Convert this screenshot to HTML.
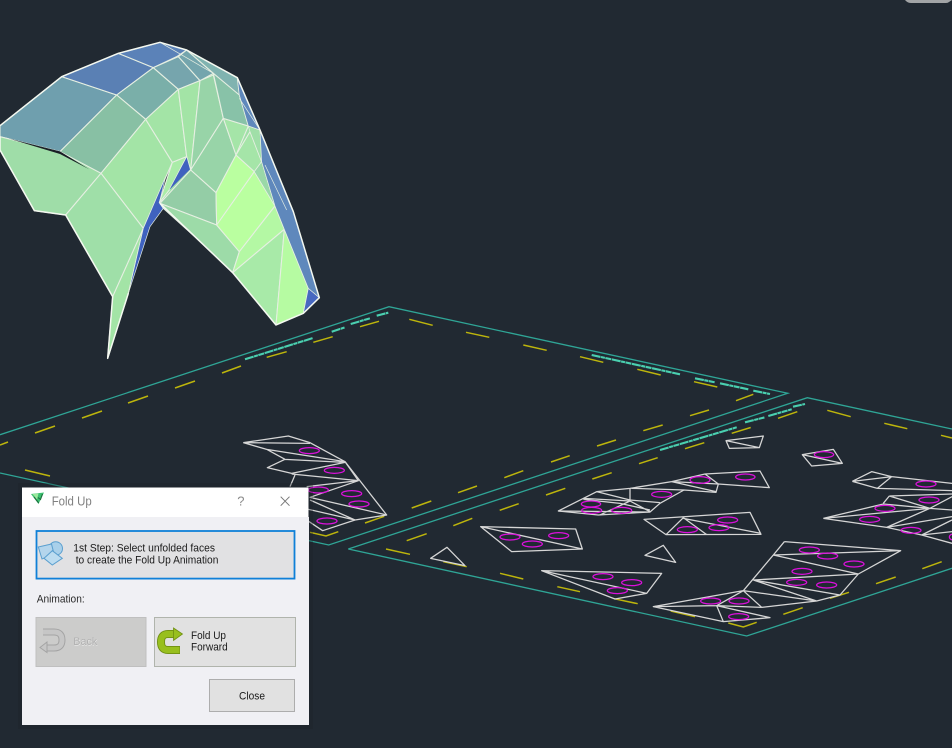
<!DOCTYPE html>
<html><head><meta charset="utf-8"><title>Fold Up</title>
<style>
html,body{margin:0;padding:0;background:#212932;width:952px;height:748px;overflow:hidden}
svg{display:block;filter:blur(.3px)}
text{font-family:"Liberation Sans",sans-serif}
</style></head>
<body>
<svg width="952" height="748" viewBox="0 0 952 748" xmlns="http://www.w3.org/2000/svg">
<rect width="952" height="748" fill="#212932"/>
<path d="M905,0 H952 V0 L949,2 Q948,3 946,3 H911 Q908,3 906,1Z" fill="#a2a4a6"/>

<!-- teal sheet borders -->
<g fill="none" stroke="#2fa596" stroke-width="1.3">
<path d="M0,434.7 L389,306.7 L787.7,393.3 L328.7,545 L0,473"/>
<path d="M348.3,549 L807.3,397.7 L952,429"/>
<path d="M348.3,549 L746.7,636 L952,568.3"/>
</g>

<!-- garbled sheet labels -->
<g fill="none" stroke="#4ad0b0" stroke-width="2.1" stroke-dasharray="9 .5 4 .5 6 .6">
<path d="M245,359.3 L313,338 M331.7,331.7 L345,327.3 M350.7,324 L370,318.3 M376.7,315.7 L388.3,312.7"/>
<path d="M591.7,355 L680,374.3 M695,378.3 L715,382.3 M720,383.3 L748.3,389.3 M753.3,390.7 L770,394"/>
<path d="M660,450 L736.7,427.3 M745,422.3 L765,417.3 M768.3,416 L791.7,409.3 M793,406.7 L805,404"/>
</g>

<!-- yellow dashes -->
<g fill="none" stroke="#bdb50c" stroke-width="1.5">
<path d="M0,445 L8,442 M35,433 L55,426 M82,418 L102,411 M128,403 L148,396 M175,388 L195,381 M222,373 L241,366 M266.7,357.3 L286.7,351.7 M313.3,342.3 L332.7,336.7 M360,326.7 L379,321.3"/>
<path d="M409.3,319.3 L432.7,325.3 M466,332.3 L489.3,337.3 M523.3,345 L546.7,350.3 M580,356.7 L603.3,362.3 M637.3,369.3 L660.7,375 M694,381.7 L717.3,387"/>
<path d="M736,400.7 L753.3,394.3 M690,415.7 L709,410 M643.3,430.7 L662.7,425 M597,446 L616,440 M551,462 L569.7,455.7 M504.3,477.7 L523.3,470.7 M458,492.7 L477,486 M411.7,508 L431.3,501 M365,523 L384.3,516.3"/>
<path d="M310,532.3 L326,536 L338.3,531.7 M25,470 L50,476"/>
<path d="M406.7,540.7 L426.7,533.7 M453.3,525.7 L472.3,518.3 M499.7,510.3 L518.7,503.7 M546,495 L565.3,488.3 M592.3,479 L611.7,472.7 M639,463.7 L657.7,457.7 M685,448.7 L704.3,442.7 M731.7,433.3 L750.7,427.5 M778,418.3 L797.3,411.7"/>
<path d="M827.3,410.3 L850.7,416.7 M884.3,423.3 L907.3,428.7 M941,435.3 L952,438"/>
<path d="M386,549 L410,554.3 M443.3,561.7 L466.7,566.7 M500,573.3 L523.3,579 M557.3,586.7 L580,591.7 M614,598.7 L637.7,603.7 M670.7,611 L695,616.7 M728.3,623 L743.3,627 L756.7,622.3 M783.3,614.3 L802.7,607.7 M830,598.3 L849,592.3 M876,583.7 L895.7,577 M922.3,568.7 L941.7,561.7"/>
</g>

<!-- folded mesh -->
<g transform="translate(0,30) scale(.33333)" stroke="#e6efe2" stroke-width="3.2" stroke-linejoin="round">
<polygon fill="#a0dfa8" stroke="none" points="600,152 640,130 712,143 745,288 780,300 785,400 825,528 853,598 925,775 828,885 698,728 480,520"/>
<polygon fill="#6f9fae" points="0,287 185,140 350,195 180,365 0,320"/>
<polygon fill="#5a80b4" points="185,140 355,70 460,113 350,195"/>
<polygon fill="#5b82b8" points="355,70 480,37 560,60 530,80 460,113"/>
<polygon fill="#7aafa9" points="350,195 460,113 535,178 437,268"/>
<polygon fill="#76a5ad" points="460,113 535,80 600,152 535,178"/>
<polygon fill="#74a5ad" points="535,80 560,60 640,130 600,152"/>
<polygon fill="#80b3b0" points="560,60 712,143 718,195 670,180 640,130"/>
<polygon fill="#88c0a4" points="180,365 350,195 437,268 303,430"/>
<polygon fill="#9fdda8" points="0,320 180,365 303,430 197,555 103,542 0,360"/>
<polygon fill="#1a1f26" stroke="none" points="25,325 180,364 268,418 180,372"/>
<polygon fill="#a3e4a6" points="303,430 437,268 517,397 430,595"/>
<polygon fill="#9fdfa8" points="197,555 303,430 430,595 338,800"/>
<polygon fill="#a3e4a6" points="338,800 430,595 385,790 323,985"/>
<polygon fill="#3f62bf" stroke-width="2" points="385,790 430,595 497,440 478,518 490,535 450,590"/>
<polygon fill="#a3e4a6" points="437,268 535,178 560,380 517,397"/>
<polygon fill="#a3e4a6" points="535,178 600,152 572,420 560,380"/>
<polygon fill="#98d4a8" points="600,152 640,135 670,265 572,420"/>
<polygon fill="#aaeca8" points="517,397 560,380 508,480 478,518"/>
<polygon fill="#3f62bf" stroke="none" points="560,382 570,418 508,480"/>
<polygon fill="#98d4a8" points="572,420 670,265 708,375 648,488"/>
<polygon fill="#94cda6" points="480,520 572,420 648,488 650,585"/>
<polygon fill="#9ddba8" points="480,520 650,585 718,665 698,728 590,625 490,535"/>
<polygon fill="#baffa0" points="648,488 708,375 763,425 650,585"/>
<polygon fill="#baffa0" points="650,585 763,425 825,528 718,665"/>
<polygon fill="#b4f8a4" points="718,665 825,528 853,598 698,728"/>
<polygon fill="#a8eaa8" points="698,728 853,598 828,885"/>
<polygon fill="#b6fba2" points="853,598 925,775 910,850 828,885"/>
<polygon fill="#4768c0" stroke-width="2" points="925,775 958,803 910,850"/>
<polygon fill="#a5e5a8" points="670,265 745,288 708,375"/>
<polygon fill="#a5e5a8" points="708,375 750,305 785,395 763,425"/>
<polygon fill="#88c2a8" points="640,130 718,195 745,288 670,265"/>
<polygon fill="#a0dfa8" stroke-width="2" points="745,288 780,300 785,395 750,305"/>
<polygon fill="#9ad8a8" stroke-width="2" points="763,425 785,395 825,528"/>
<polygon fill="#a0dfa8" stroke-width="2" points="785,395 853,598 825,528"/>
<polygon fill="#5f88bc" stroke-width="2" points="712,143 780,300 880,545 958,803 925,775 853,598 825,528 785,395 780,300 745,288 718,195"/>
<path fill="none" stroke-width="2" d="M718,205 L780,300 M795,405 L860,540 M480,37 L640,130"/>
<path fill="none" stroke="#f4f8f0" stroke-width="4.5" d="M0,287 L185,140 L355,70 L480,37 L560,60 L712,143 L780,300 L880,545 L958,803 L910,850 L828,885 L698,728 L590,625 L480,520 M0,320 L0,360 L103,542 L197,555 L338,800 L323,985 L385,790"/>
</g>

<!-- unfolded faces: left cluster -->
<g transform="translate(230,300) scale(.33333)">
<g fill="none" stroke="#d6d6d6" stroke-width="3.8" stroke-linejoin="round">
<path d="M40,428 L175,408 L240,428 L345,485 L470,645 L375,660 L278,692 L200,640"/>
<path d="M40,428 L240,430 M40,428 L110,448 L345,485 M110,448 L165,478 L345,487 M165,478 L112,503 L185,520 L345,487 M195,525 L180,560 M185,522 L385,542 M230,560 L385,542 L240,592 L470,645 M240,600 L375,660 M345,485 L385,542 M200,620 L375,660"/>
</g>
<g fill="none" stroke="#dc10dc" stroke-width="3.8">
<ellipse cx="238" cy="452" rx="30" ry="9"/><ellipse cx="313" cy="511" rx="30" ry="9"/><ellipse cx="265" cy="570" rx="30" ry="9"/><ellipse cx="365" cy="581" rx="30" ry="9"/><ellipse cx="387" cy="612" rx="30" ry="9"/><ellipse cx="291" cy="663" rx="30" ry="9"/>
</g>
</g>

<!-- unfolded faces: sheet 2 -->
<g transform="translate(340,400) scale(.33333)">
<g fill="none" stroke="#d6d6d6" stroke-width="3.8" stroke-linejoin="round">
<path d="M422,380 L707,387 L727,447 L515,455 Z M422,380 L727,447"/>
<path d="M272,475 L321,442 L375,497 Z"/>
</g>
<g fill="none" stroke="#dc10dc" stroke-width="3.8">
<ellipse cx="510" cy="411" rx="30" ry="9"/><ellipse cx="577" cy="432" rx="30" ry="9"/><ellipse cx="656" cy="407" rx="30" ry="9"/>
</g>
</g>
<g transform="translate(540,420) scale(.33333)">
<g fill="none" stroke="#d6d6d6" stroke-width="3.8" stroke-linejoin="round">
<path d="M558,62 L670,48 L658,83 L568,85 Z M558,62 L658,83"/>
<path d="M787,104 L880,88 L907,130 L815,138 Z M787,104 L907,130"/>
<path d="M55,273 L170,215 L270,205 L395,185 L495,162 L660,153 L688,203 L535,192 L528,217 L432,210 L360,250 L330,276 L175,285 Z"/>
<path d="M170,215 L270,240 L360,248 M130,235 L270,243 M270,205 L270,243 M275,205 L432,210 M395,185 L528,215 M495,162 L535,192 M395,185 L535,192 M55,273 L330,276 M270,243 L330,275 M270,243 L180,285 M130,238 L240,250 L330,270"/>
<path d="M312,298 L630,277 L663,343 L378,344 Z M430,293 L378,344 M430,293 L500,344 M430,295 L663,340"/>
<path d="M315,406 L370,376 L407,427 Z" />
<path d="M5,452 L365,460 L320,520 L225,537 Z M5,452 L320,520"/>
<path d="M733,365 L1082,392 L955,462 L900,525 L830,543 L665,562 M733,365 L700,405 L610,512 L340,560 L550,605 L690,593 L530,557 L340,560 M700,405 L1082,392 M700,405 L955,462 M640,480 L955,462 M640,480 L900,525 M640,480 L830,543 M610,512 L830,543 M610,512 L530,557 M610,512 L665,562 M530,557 L665,562 M530,557 L550,605"/>
<path d="M937,184 L995,155 L1055,170 L1236,190 M937,184 L1055,170 L1012,205 L937,184 M1012,205 L1236,212 M1048,228 L1236,222 M1048,228 L1170,265 M1048,228 L1030,250 M850,295 L1030,252 L1170,265 M850,295 L1170,265 M850,295 L1040,322 L1145,345 L1236,370 M1040,322 L1170,265 M1040,322 L1236,290 M1145,345 L1236,300 M1145,345 L1236,335 M1170,265 L1236,270 M1170,265 L1236,230"/>
</g>
<g fill="none" stroke="#dc10dc" stroke-width="3.8">
<ellipse cx="153" cy="252" rx="29" ry="9"/><ellipse cx="155" cy="271" rx="30" ry="9"/><ellipse cx="245" cy="271" rx="30" ry="9"/><ellipse cx="365" cy="223" rx="30" ry="9"/><ellipse cx="480" cy="180" rx="30" ry="10"/><ellipse cx="616" cy="171" rx="29" ry="9"/>
<ellipse cx="852" cy="104" rx="29" ry="9"/>
<ellipse cx="442" cy="329" rx="30" ry="9"/><ellipse cx="537" cy="323" rx="30" ry="9"/><ellipse cx="563" cy="300" rx="30" ry="9"/>
<ellipse cx="189" cy="470" rx="30" ry="9"/><ellipse cx="275" cy="488" rx="30" ry="9"/><ellipse cx="232" cy="512" rx="30" ry="9"/>
<ellipse cx="808" cy="390" rx="30" ry="9"/><ellipse cx="863" cy="408" rx="30" ry="9"/><ellipse cx="942" cy="432" rx="30" ry="9"/><ellipse cx="786" cy="454" rx="30" ry="9"/><ellipse cx="770" cy="487" rx="30" ry="9"/><ellipse cx="860" cy="495" rx="30" ry="9"/><ellipse cx="512" cy="543" rx="30" ry="9"/><ellipse cx="597" cy="543" rx="30" ry="9"/><ellipse cx="596" cy="590" rx="30" ry="9"/>
<ellipse cx="1158" cy="192" rx="30" ry="9"/><ellipse cx="1167" cy="240" rx="30" ry="9"/><ellipse cx="1035" cy="265" rx="30" ry="9"/><ellipse cx="989" cy="298" rx="30" ry="9"/><ellipse cx="1113" cy="331" rx="30" ry="9"/><ellipse cx="1240" cy="351" rx="12" ry="9"/>
</g>
</g>

<!-- dialog -->
<rect x="18" y="483" width="295" height="246" fill="#1b2128" opacity=".3"/>
<rect x="22" y="487.5" width="286.5" height="30" fill="#ffffff"/>
<rect x="22" y="517" width="287" height="208" fill="#f0f0f4"/>

<!-- logo -->
<polygon points="31,494 44,492.5 38.5,504" fill="#3cc070"/>
<polygon points="32.5,494 38.5,493.5 37,499.5" fill="#9ce89c"/>
<path d="M34,497 L38.7,503 M38,497.5 L40.5,499.5 L42.5,494" fill="none" stroke="#1e6e3e" stroke-width="1.1"/>
<text x="51.7" y="505.7" font-size="13" fill="#808080" textLength="40" lengthAdjust="spacingAndGlyphs">Fold Up</text>
<text x="237.3" y="505.7" font-size="13" fill="#8a8a8a">?</text>
<path d="M280.7,496.7 L289.5,505.7 M289.5,496.7 L280.7,505.7" stroke="#777" stroke-width="1" fill="none"/>

<!-- primary button -->
<rect x="36.5" y="531" width="258" height="47.6" fill="#e1e1e3" stroke="#0f80d8" stroke-width="1.8"/>
<circle cx="55.7" cy="548.5" r="6.8" fill="#a9d0ea" stroke="#5a9fcf" stroke-width="1"/>
<polygon points="38.3,547 51.5,544 54,554 42,559" fill="#b4d5ec" stroke="#5a9fcf" stroke-width="1"/>
<polygon points="52.3,550.7 62.3,558.3 52.3,565 44,558.3" fill="#bcdcf0" stroke="#5a9fcf" stroke-width="1"/>
<text x="73.3" y="551.5" font-size="11" fill="#1a1a1a" textLength="141.7" lengthAdjust="spacingAndGlyphs">1st Step: Select unfolded faces</text>
<text x="75.7" y="563.3" font-size="11" fill="#1a1a1a" textLength="142.7" lengthAdjust="spacingAndGlyphs">to create the Fold Up Animation</text>

<text x="36.7" y="602.7" font-size="11" fill="#2a2a2a" textLength="48" lengthAdjust="spacingAndGlyphs">Animation:</text>

<!-- back button -->
<rect x="36" y="617.5" width="110" height="49" fill="#cccccb" stroke="#bfbfbf" stroke-width="1"/>
<path d="M43,632 H54 Q62,632 62,640 Q62,648 54,648 H46" fill="none" stroke="#a4a4a4" stroke-width="7"/>
<path d="M43,632 H54 Q62,632 62,640 Q62,648 54,648 H46" fill="none" stroke="#c6c6c6" stroke-width="5"/>
<polygon points="40,647.5 47,642 47,652.5" fill="#c6c6c6" stroke="#a4a4a4" stroke-width="1"/>
<text x="73.6" y="645.6" font-size="11" fill="#fff" opacity=".8" textLength="24" lengthAdjust="spacingAndGlyphs">Back</text>
<text x="73.3" y="645" font-size="11" fill="#b0b0b0" textLength="24" lengthAdjust="spacingAndGlyphs">Back</text>

<!-- forward button -->
<rect x="154.5" y="617.5" width="141" height="49" fill="#e1e1e1" stroke="#b0b4ac" stroke-width="1"/>
<path d="M175,634 H168 Q161,634 161,642 Q161,650 168,650 H180" fill="none" stroke="#6f8f12" stroke-width="8"/>
<path d="M175,634 H168 Q161,634 161,642 Q161,650 168,650 H179.5" fill="none" stroke="#98bf1e" stroke-width="6.2"/>
<polygon points="173.5,628 182.5,634 173.5,640.5" fill="#98bf1e" stroke="#6f8f12" stroke-width=".8"/>
<text x="191" y="639" font-size="11" fill="#1a1a1a" textLength="35" lengthAdjust="spacingAndGlyphs">Fold Up</text>
<text x="191" y="650.7" font-size="11" fill="#1a1a1a" textLength="36.7" lengthAdjust="spacingAndGlyphs">Forward</text>

<!-- close button -->
<rect x="209.5" y="679.5" width="85" height="32" fill="#e1e1e1" stroke="#adadad" stroke-width="1"/>
<text x="239" y="699.3" font-size="11" fill="#1a1a1a" textLength="26" lengthAdjust="spacingAndGlyphs">Close</text>
</svg>
</body></html>
